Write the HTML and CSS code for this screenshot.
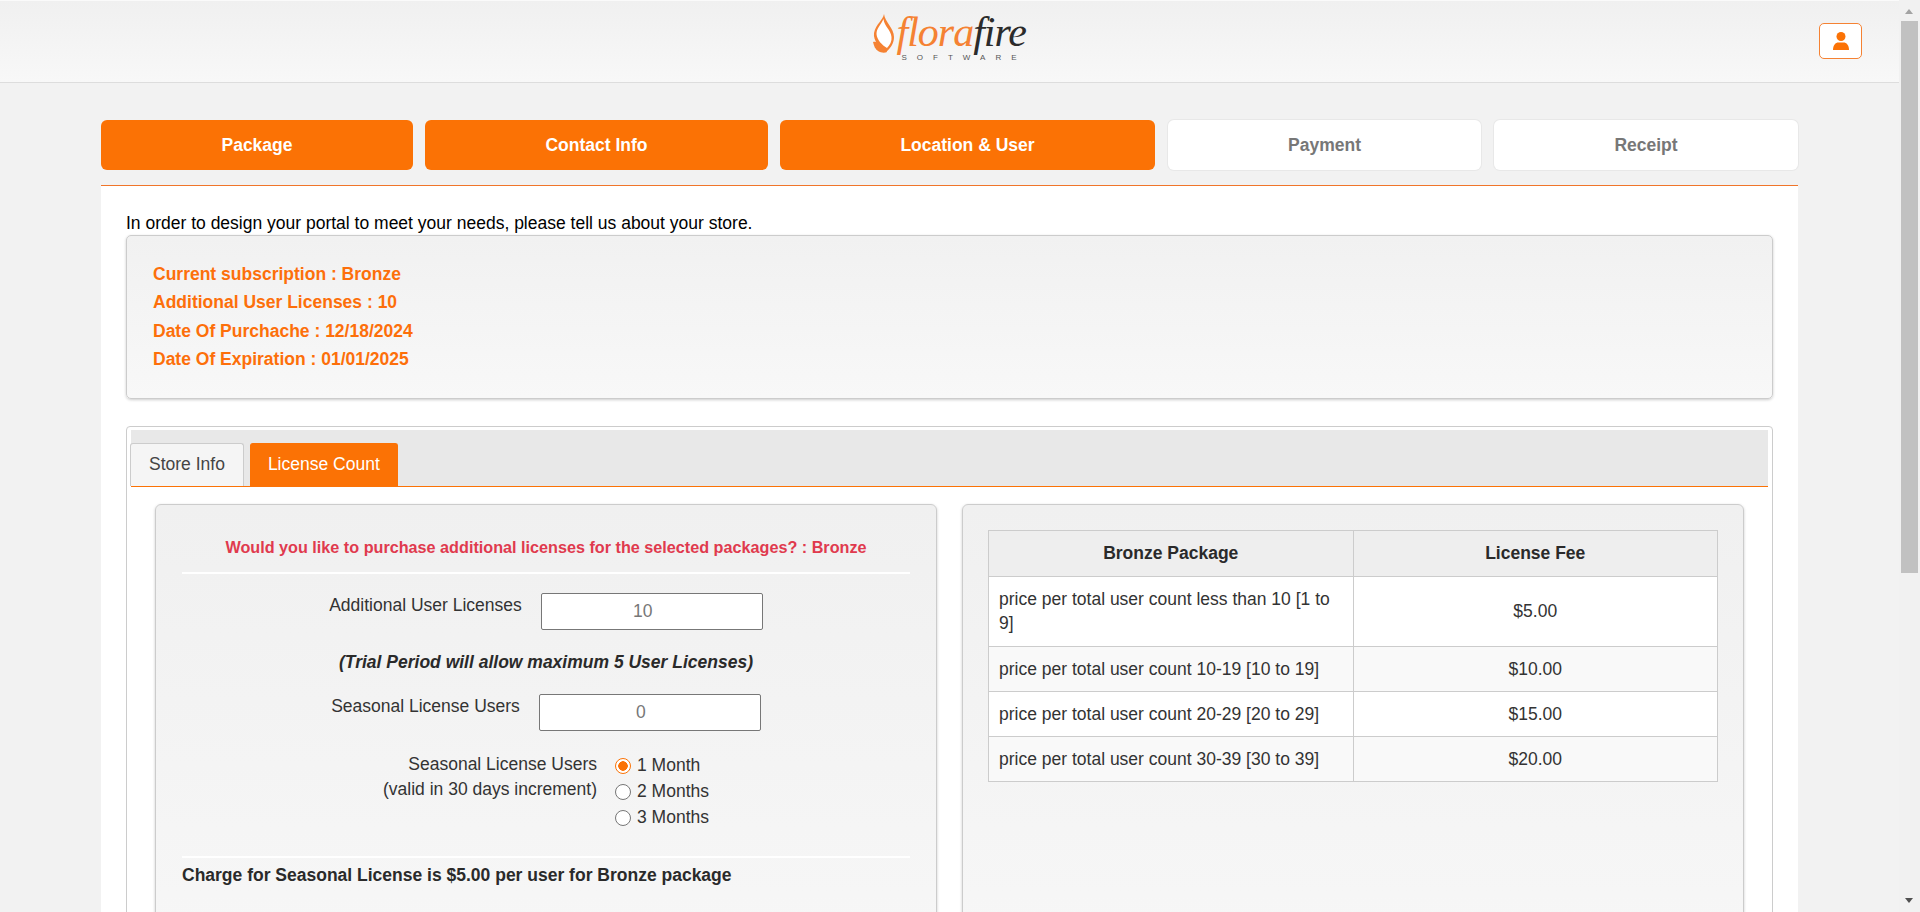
FILE: index.html
```html
<!DOCTYPE html>
<html lang="en">
<head>
  <meta charset="UTF-8">
  <meta name="viewport" content="width=device-width, initial-scale=1.0">
  <title>Florafire Software - Signup</title>
  <link rel="stylesheet" href="styles.css">
</head>
<body>
  <div class="page">
    <header class="top-bar">
      <div class="logo">
        <svg class="logo-flame" viewBox="0 0 26 44" width="26" height="44">
          <path d="M14 2C13 8 6 12 4 21C3 29 10 36 16 40C21 36 24 31 24 25C24 16 15 10 14 2Z" fill="#f58233"/>
          <path d="M13.500 7C11 13 6.500 16 6.500 22C7 28 12 33 17 36C20 33 22 29 21.500 25C21 18 14 14 13.500 7Z" fill="#fff"/>
          <path d="M3 30C8 29 14 33 17 40C15 41 11 41 8 39C5 37 4 34 3 30Z" fill="#f58233"/>
        </svg>
        <div class="logo-text">
          <div class="logo-name"><span class="logo-flora">flora</span><span class="logo-fire">fire</span></div>
          <div class="logo-sub">SOFTWARE</div>
        </div>
      </div>
      <button class="user-btn" type="button" aria-label="User">
        <svg viewBox="0 0 16 18" width="16" height="18">
          <circle cx="8" cy="4.500" r="4.500" fill="#fb7205"/>
          <path d="M0 18C0 13 2.500 10.500 5.500 10.500H10.500C13.500 10.500 16 13 16 18Z" fill="#fb7205"/>
        </svg>
      </button>
    </header>

    <main class="content">
      <nav class="steps">
        <a class="step done">Package</a>
        <a class="step done">Contact Info</a>
        <a class="step done">Location &amp; User</a>
        <a class="step">Payment</a>
        <a class="step">Receipt</a>
      </nav>

      <section class="sheet">
        <p class="intro">In order to design your portal to meet your needs, please tell us about your store.</p>

        <div class="summary">
          <p>Current subscription : Bronze</p>
          <p>Additional User Licenses : 10</p>
          <p>Date Of Purchache : 12/18/2024</p>
          <p>Date Of Expiration : 01/01/2025</p>
        </div>

        <div class="tab-box">
          <ul class="tabs">
            <li class="tab">Store Info</li>
            <li class="tab active">License Count</li>
          </ul>

          <div class="tab-body">
            <div class="panel">
              <h4 class="question">Would you like to purchase additional licenses for the selected packages? : Bronze</h4>
              <hr class="rule">

              <div class="field">
                <label class="field-label" for="extra">Additional User Licenses</label>
                <input class="field-input" id="extra" type="text" value="10">
              </div>
              <p class="trial">(Trial Period will allow maximum 5 User Licenses)</p>
              <div class="field">
                <label class="field-label" for="seasonal">Seasonal License Users</label>
                <input class="field-input" id="seasonal" type="text" value="0">
              </div>

              <div class="months">
                <div class="months-label">Seasonal License Users<br>(valid in 30 days increment)</div>
                <div class="months-list">
                  <label class="month"><input type="radio" name="months" checked> 1 Month</label>
                  <label class="month"><input type="radio" name="months"> 2 Months</label>
                  <label class="month"><input type="radio" name="months"> 3 Months</label>
                </div>
              </div>

              <hr class="rule rule-low">
              <p class="charge">Charge for Seasonal License is $5.00 per user for Bronze package</p>
            </div>

            <div class="panel panel-table">
              <table class="fees">
                <thead>
                  <tr><th>Bronze Package</th><th>License Fee</th></tr>
                </thead>
                <tbody>
                  <tr><td>price per total user count less than 10 [1 to 9]</td><td>$5.00</td></tr>
                  <tr><td>price per total user count 10-19 [10 to 19]</td><td>$10.00</td></tr>
                  <tr><td>price per total user count 20-29 [20 to 29]</td><td>$15.00</td></tr>
                  <tr><td>price per total user count 30-39 [30 to 39]</td><td>$20.00</td></tr>
                </tbody>
              </table>
            </div>
          </div>
        </div>
      </section>
    </main>
  </div>

  <div class="scrollbar">
    <span class="arrow-up"></span>
    <span class="thumb"></span>
    <span class="arrow-down"></span>
  </div>
</body>
</html>
```

FILE: styles.css
```css
* {
  box-sizing: border-box;
}
html, body {
  height: 100%;
}
body {
  margin: 0;
  display: flex;
  overflow: hidden;
  background: #f2f2f2;
  color: #333;
  font-family: "Liberation Sans", Arial, sans-serif;
  font-size: 17.5px;
  line-height: 1.43;
}
.page {
  flex: 1;
  min-width: 0;
  height: 100%;
  overflow: hidden;
}

/* header */
.top-bar {
  position: relative;
  height: 83px;
  display: flex;
  justify-content: center;
  background: linear-gradient(#f0f0f0, #f8f8f8);
  border-top: 1px solid #fafafa;
  border-bottom: 1px solid #ddd;
}
.logo {
  display: flex;
  align-items: flex-start;
  width: 160px;
  margin-top: 11px;
}
.logo-flame {
  flex: none;
}
.logo-text {
  margin-left: 1px;
  margin-top: 1px;
}
.logo-name {
  font-family: "Liberation Serif", serif;
  font-style: italic;
  font-size: 42px;
  line-height: 38px;
  letter-spacing: -1px;
  white-space: nowrap;
}
.logo-flora {
  color: #f58233;
}
.logo-fire {
  color: #2b2b2b;
}
.logo-sub {
  margin-top: 3px;
  margin-left: 5px;
  font-size: 8px;
  line-height: 8px;
  letter-spacing: 10px;
  color: #555;
  white-space: nowrap;
}
.user-btn {
  position: absolute;
  top: 22px;
  right: 37px;
  width: 43px;
  height: 36px;
  padding: 0;
  display: flex;
  align-items: center;
  justify-content: center;
  background: #fff;
  border: 1px solid #f58233;
  border-radius: 5px;
}

/* steps */
.content {
  padding: 37px 101px 0;
}
.steps {
  display: grid;
  grid-template-columns: 312px 343px 375px 315px 1fr;
  column-gap: 12px;
}
.step {
  height: 50px;
  margin: 0 1px;
  padding-top: 1px;
  display: flex;
  align-items: center;
  justify-content: center;
  background: #fff;
  border-radius: 6px;
  box-shadow: 0 0 0 1px #e8e8e8;
  color: #777;
  font-weight: bold;
}
.step:last-child {
  margin: 0;
}
.step.done {
  margin: 0;
  background: #fb7205;
  box-shadow: none;
  color: #fff;
}

/* sheet */
.sheet {
  margin-top: 15px;
  padding: 25px 25px 0;
  background: #fff;
  border-top: 1px solid #f0752a;
}
.intro {
  margin: 0;
  color: #000;
  line-height: 24px;
}
.summary {
  height: 164px;
  padding: 24px 26px;
  background: linear-gradient(#f1f1f1, #f8f8f8);
  border: 1px solid #ccc;
  border-radius: 5px;
  box-shadow: 0 1px 3px rgba(0, 0, 0, 0.2);
  color: #fd6f0a;
  font-weight: bold;
}
.summary p {
  margin: 0;
  line-height: 28.4px;
}

/* tabs */
.tab-box {
  margin-top: 27px;
  padding: 3px 4px;
  border: 1px solid #ccc;
  border-radius: 4px 4px 0 0;
}
.tabs {
  display: flex;
  gap: 6px;
  margin: 0;
  padding: 13px 0 0;
  list-style: none;
  background: #e8e8e8;
  border-bottom: 1px solid #fb7205;
  height: 57px;
}
.tab {
  height: 43px;
  padding: 0 18px;
  display: flex;
  align-items: center;
  background: #f5f5f5;
  border: 1px solid #ccc;
  border-bottom: 0;
  border-radius: 3px 3px 0 0;
  color: #444;
}
.tab:first-child {
  margin-left: -1px;
}
.tab.active {
  padding: 0 17px;
  background: #fb7205;
  border-color: #fb7205;
  color: #fff;
}
.tab-body {
  display: grid;
  grid-template-columns: 782px 782px;
  column-gap: 25px;
  padding: 17px 24px 0;
}
.panel {
  min-height: 520px;
  padding: 27px 26px;
  background: linear-gradient(#f0f0f0, #f8f8f8);
  border: 1px solid #ccc;
  border-radius: 6px;
  box-shadow: 0 1px 3px rgba(0, 0, 0, 0.2);
}
.panel-table {
  padding: 25px;
}

/* left form */
.question {
  margin: 0;
  text-align: center;
  color: #e03a4e;
  font-size: 16.2px;
  line-height: 30px;
}
.rule {
  margin: 10px 0 0;
  border: 0;
  border-top: 2px solid #fff;
}
.rule-low {
  margin-top: 25px;
}
.field {
  display: flex;
  justify-content: center;
  gap: 19px;
  margin-top: 19px;
}
.field-label {
  line-height: 24px;
}
.field-input {
  width: 222px;
  height: 37px;
  padding: 0 30px 0 12px;
  background: #fff;
  border: 1px solid #777;
  border-radius: 2px;
  color: #777;
  font: inherit;
  text-align: center;
}
.trial {
  margin: 20px 0;
  text-align: center;
  color: #2a2a2a;
  font-weight: bold;
  font-style: italic;
  line-height: 24px;
}
.months {
  display: flex;
  justify-content: center;
  gap: 18px;
  margin-top: 21px;
}
.months-label {
  text-align: right;
  line-height: 25px;
}
.months-list {
  margin-top: 1px;
}
.month {
  display: flex;
  align-items: center;
  gap: 6px;
  height: 26px;
}
.month input {
  appearance: none;
  flex: none;
  width: 16px;
  height: 16px;
  margin: 0;
  background: #fff;
  border: 1.5px solid #767676;
  border-radius: 50%;
}
.month input:checked {
  border-color: #fb7205;
  background: radial-gradient(circle, #fb7205 0 4.5px, #fff 5px);
}
.charge {
  margin: 5px 0 0;
  color: #2a2a2a;
  font-weight: bold;
  line-height: 24px;
}

/* fee table */
.fees {
  width: 100%;
  table-layout: fixed;
  border-collapse: collapse;
  background: #fff;
}
.fees th, .fees td {
  padding: 10px;
  border: 1px solid #ccc;
  line-height: 24.3px;
}
.fees th {
  height: 46px;
  background: #eee;
  color: #2a2a2a;
}
.fees td + td {
  text-align: center;
}
.fees tbody tr:nth-child(even) td {
  background: #f9f9f9;
}

/* scrollbar */
.scrollbar {
  flex: none;
  width: 21px;
  height: 100%;
  position: relative;
  background: #f1f1f1;
}
.thumb {
  position: absolute;
  top: 21px;
  left: 2px;
  width: 17px;
  height: 552px;
  background: #c1c1c1;
}
.arrow-up, .arrow-down {
  position: absolute;
  left: 6px;
  border-left: 4.5px solid transparent;
  border-right: 4.5px solid transparent;
}
.arrow-up {
  top: 9px;
  border-bottom: 5px solid #a3a3a3;
}
.arrow-down {
  bottom: 9px;
  border-top: 5px solid #505050;
}
```
